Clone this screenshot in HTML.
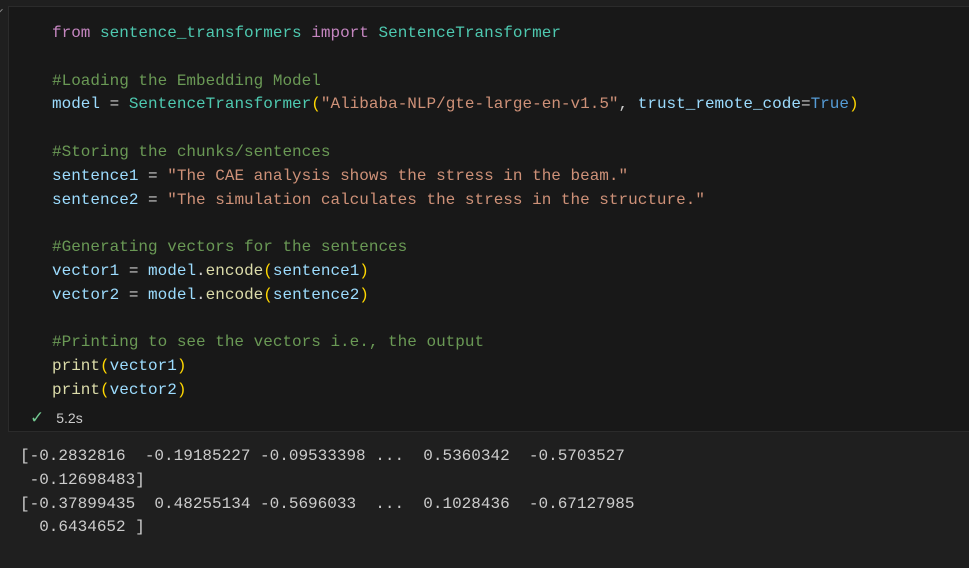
<!DOCTYPE html>
<html><head><style>
body{margin:0;width:969px;height:568px;background:#1f1f1f;overflow:hidden;font-family:"Liberation Mono",monospace;font-size:16px;}
.cell{position:absolute;left:8px;top:6px;width:970px;height:426px;background:#181818;border:1px solid #2b2b2b;box-sizing:border-box;}
pre{margin:0;font-family:"Liberation Mono",monospace;font-size:16px;line-height:23.8px;}
.code{position:absolute;left:52px;top:22px;color:#cccccc;}
.k{color:#c586c0}.m{color:#4ec9b0}.c{color:#6a9955}.v{color:#9cdcfe}.s{color:#ce9178}.f{color:#dcdcaa}.p{color:#ffd700}.b{color:#569cd6}
.out{position:absolute;left:20px;top:445px;color:#cccccc;line-height:23.8px;}
.st{position:absolute;left:30px;top:408px;color:#cccccc;font-family:"Liberation Sans",sans-serif;font-size:14px;}
</style></head><body>
<div style="position:absolute;left:0;top:10px;width:4px;height:4px;border-left:1px solid #888;transform:rotate(45deg);"></div>
<div class="cell"></div>
<pre class="code"><span class="k">from</span> <span class="m">sentence_transformers</span> <span class="k">import</span> <span class="m">SentenceTransformer</span>

<span class="c">#Loading the Embedding Model</span>
<span class="v">model</span> = <span class="m">SentenceTransformer</span><span class="p">(</span><span class="s">"Alibaba-NLP/gte-large-en-v1.5"</span>, <span class="v">trust_remote_code</span>=<span class="b">True</span><span class="p">)</span>

<span class="c">#Storing the chunks/sentences</span>
<span class="v">sentence1</span> = <span class="s">"The CAE analysis shows the stress in the beam."</span>
<span class="v">sentence2</span> = <span class="s">"The simulation calculates the stress in the structure."</span>

<span class="c">#Generating vectors for the sentences</span>
<span class="v">vector1</span> = <span class="v">model</span>.<span class="f">encode</span><span class="p">(</span><span class="v">sentence1</span><span class="p">)</span>
<span class="v">vector2</span> = <span class="v">model</span>.<span class="f">encode</span><span class="p">(</span><span class="v">sentence2</span><span class="p">)</span>

<span class="c">#Printing to see the vectors i.e., the output</span>
<span class="f">print</span><span class="p">(</span><span class="v">vector1</span><span class="p">)</span>
<span class="f">print</span><span class="p">(</span><span class="v">vector2</span><span class="p">)</span></pre>
<div class="st"><span style="color:#73c991;font-size:17px;margin-right:12px;">✓</span>5.2s</div>
<pre class="out">[-0.2832816  -0.19185227 -0.09533398 ...  0.5360342  -0.5703527
 -0.12698483]
[-0.37899435  0.48255134 -0.5696033  ...  0.1028436  -0.67127985
  0.6434652 ]</pre>
</body></html>
